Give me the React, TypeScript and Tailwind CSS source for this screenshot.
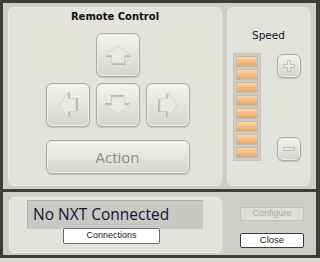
import React from 'react';

const btn =
  'flex items-center justify-center rounded-[6px] border border-[#acaca6] bg-gradient-to-b from-[#f4f4f0] to-[#d6d6d0] shadow-[inset_0_0_0_1px_#ecece8,0_1px_1px_rgba(0,0,0,0.15)]';

function Arrow({ dir }: { dir: 'up' | 'down' | 'left' | 'right' }) {
  const rot = { up: 0, right: 90, down: 180, left: 270 }[dir];
  return (
    <svg width="28" height="28" viewBox="0 0 28 28" style={{ transform: `rotate(${rot}deg)` }}>
      <polygon
        points="14,6 27,15 20.5,15 20.5,23 7.5,23 7.5,15 1,15"
        fill="#b9b9b4"
        transform="translate(0.6,1)"
      />
      <polygon
        points="14,5 27,14 20.5,14 20.5,22 7.5,22 7.5,14 1,14"
        fill="#e9e9e5"
        stroke="#cfcfca"
        strokeWidth="0.8"
        strokeLinejoin="round"
      />
    </svg>
  );
}

export default function App() {
  const bars = Array.from({ length: 8 });
  return (
    <div className="w-[320px] h-[262px] flex flex-col bg-[#d6d6d2] overflow-hidden" style={{ fontFamily: '"Liberation Sans", Arial, sans-serif' }}>
      {/* top area */}
      <div className="h-[189px] flex gap-[5px] bg-[#cfcfc8] border-t-[3px] border-l-[3px] border-r-[4px] border-[#3d3d3d] pl-[5px] pr-[6px] pt-[4px] pb-[3px]">
        <div className="w-[214px] rounded-[6px] bg-[#e3e3db] border border-[#ecece6] flex flex-col items-center">
          <div className="mt-[1px] font-bold text-[#101010]" style={{ fontFamily: '"DejaVu Sans", sans-serif', fontSize: '10px' }}>
            Remote Control
          </div>
          <div className="mt-[9px] grid grid-cols-[44px_44px_44px] gap-[6px] ml-[5px]">
            <div />
            <div className={`${btn} h-[44px]`}><Arrow dir="up" /></div>
            <div />
            <div className={`${btn} h-[44px]`}><Arrow dir="left" /></div>
            <div className={`${btn} h-[44px]`}><Arrow dir="down" /></div>
            <div className={`${btn} h-[44px]`}><Arrow dir="right" /></div>
          </div>
          <div className={`${btn} mt-[13px] ml-[5px] w-[144px] h-[34px] text-[15px] text-[#8c8c8a]`} style={{ fontFamily: '"Open Sans", sans-serif' }}>
            Action
          </div>
        </div>
        <div className="w-[83px] rounded-[6px] bg-[#e3e3db] border border-[#ecece6] flex flex-col">
          <div className="mt-[20px] text-center text-[#101020]" style={{ fontFamily: '"DejaVu Sans", sans-serif', fontSize: '10.5px' }}>
            Speed
          </div>
          <div className="flex mt-[9px]">
            <div className="ml-[5px] w-[28px] flex flex-col gap-[2px] bg-[#cdcdc6] p-[2px] border border-[#c4c4bd]">
              {bars.map((_, i) => (
                <div key={i} className="h-[11px] border border-[#bdbdb5] bg-gradient-to-b from-[#f9d6a8] to-[#e8a664]" />
              ))}
            </div>
            <div className="ml-[16px] flex flex-col justify-between pt-[1px] pb-[0px]">
              <div className={`${btn} w-[24px] h-[24px] rounded-[5px]`}>
                <svg width="14" height="14" viewBox="0 0 14 14">
                  <path d="M5.5 1.5h3v4h4v3h-4v4h-3v-4h-4v-3h4z" fill="#ebebe7" stroke="#bdbdb8" strokeWidth="1" />
                </svg>
              </div>
              <div className={`${btn} w-[24px] h-[24px] rounded-[5px]`}>
                <svg width="14" height="6" viewBox="0 0 14 6">
                  <rect x="1.5" y="1.5" width="11" height="3" fill="#ebebe7" stroke="#bdbdb8" strokeWidth="1" />
                </svg>
              </div>
            </div>
          </div>
        </div>
      </div>
      {/* divider */}
      <div className="h-[3px] bg-[#3d3d3d]" />
      {/* bottom area */}
      <div className="h-[66px] flex bg-[#cfcfc8] border-l-[3px] border-r-[4px] border-b-[3px] border-[#3d3d3d] pl-[6px] pt-[5px] pb-[2px]">
        <div className="w-[213px] rounded-[5px] bg-[#e3e3db] border border-[#ecece6] flex flex-col pl-[17px] pt-[2px]">
          <div className="w-[176px] h-[29px] bg-[#c8c8c4] border-t border-l border-[#b0b0ac] pl-[5px] flex items-center text-[#141432]" style={{ fontFamily: '"Open Sans", sans-serif', fontSize: '15.5px' }}>
            No NXT Connected
          </div>
          <div className="ml-[36px] w-[97px] h-[16px] bg-white border border-[#6a6a6a] rounded-[2px] flex items-center justify-center text-[9px] text-[#1a1a1a] -mt-[1px]">
            Connections
          </div>
        </div>
        <div className="flex flex-col ml-[18px] pt-[10px] gap-[12px]">
          <div className="w-[64px] h-[14px] bg-[#dededa] border border-[#c0c0bc] rounded-[2px] flex items-center justify-center text-[9px] text-[#a8a8a6]">
            Configure
          </div>
          <div className="w-[64px] h-[15px] bg-white border border-[#3a3a3a] rounded-[2px] flex items-center justify-center text-[9.5px] text-[#1a1a1a]">
            Close
          </div>
        </div>
      </div>
      <div className="flex-1 bg-[#d8d8d4]" />
    </div>
  );
}
